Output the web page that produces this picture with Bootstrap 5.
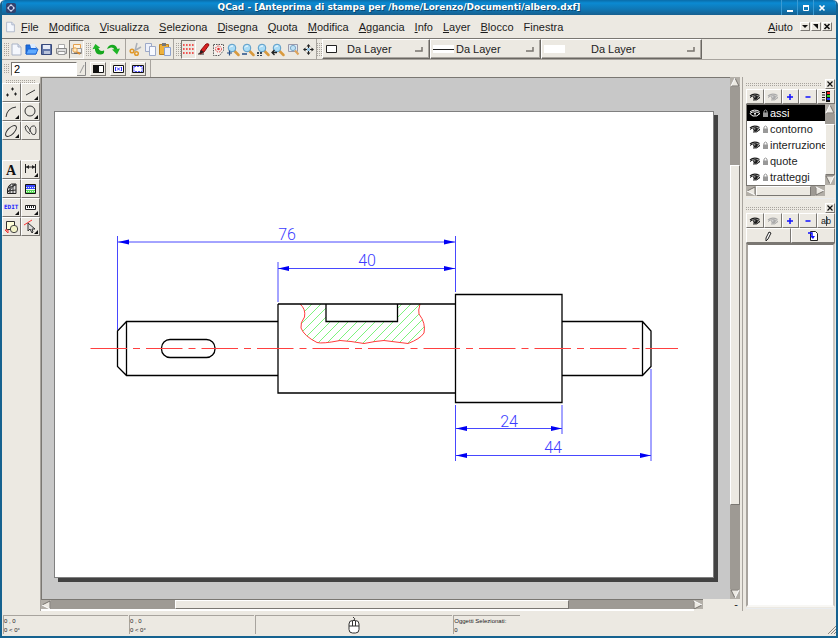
<!DOCTYPE html>
<html lang="it">
<head>
<meta charset="utf-8">
<meta name="viewport" content="width=device-width, initial-scale=1">
<title>QCad</title>
<link rel="stylesheet" href="https://cdn.jsdelivr.net/npm/bootstrap@5.3.0/dist/css/bootstrap.min.css">
<style>
:root{--face:#ece9e2;--lo:#7a7772;--mid:#a8a49e;--groove:#9e9a94;--frame:#15628f}
body{font-family:"Liberation Sans",Arial,sans-serif;font-size:11px;line-height:16px;color:#1c1c1c;background:#fff}
svg{display:block;flex:none}
.window{background:var(--face);border:solid var(--frame);border-width:0 2px 2px;border-radius:5px 5px 0 0}
.titlebar{height:15px;background:linear-gradient(#0a6ca8,#0b8ad2 3px,#0f78b6 9px,#17608f);padding:0 5px;color:#fff;margin:0 -2px;border-radius:5px 5px 0 0}
.titlebar h1{font:bold 9px/15px "DejaVu Sans",sans-serif;text-shadow:1px 1px 0 #0b4a73}
.wbtn{width:16px;height:15px;border-left:1px solid #3a9bd4 !important}
.flat{padding:0;border:0;border-radius:0;background:none;color:inherit;font:inherit;line-height:inherit;display:flex;align-items:center;justify-content:center}
.menubar{height:24px;border-bottom:1px solid var(--lo);padding:0 3px 0 2px}
.menubar .flat{padding:0 5px}
.menubar u{text-underline-offset:1px}
.menubar .mdi{width:10px;height:9px;padding:0;margin-right:1px}
.bevel{border:1px solid !important;border-color:#fff var(--lo) var(--lo) #fff !important}
.sunk{border:1px solid !important;border-color:var(--lo) #fff #fff var(--lo) !important}
.strip{height:21px;border-bottom:1px solid var(--mid);padding-left:2px}
.strip.two{height:17px;border-bottom:0}
.tb{width:15px;height:19px}
.grip,.hgrip{background:linear-gradient(var(--face) 50%,transparent 0) 0 0/2px 2px,linear-gradient(90deg,var(--mid) 50%,transparent 0) 0 0/2px 2px}
.grip{width:5px;align-self:stretch;margin:3px 0}
.hgrip{height:4px}
.sp{margin-left:2px}
.vline{width:1px;align-self:stretch;background:var(--mid)}
.combo{height:20px;border:1px solid;border-color:#fff #6a6762 #6a6762 #fff;box-shadow:inset -1px -1px var(--mid);padding:0 6px 0 3px}
.combo select{appearance:none;border:0;background:none;padding:0;font:inherit;color:inherit;outline-offset:-2px;min-width:0}
.combo.pen{flex:0 0 108px}.combo.line{flex:0 0 111px;padding-left:2px}.combo.fillw{flex:0 0 161px;padding-left:2px}
.combo.line select{margin-left:2px}.combo.pen select{margin-left:9px}.combo.fillw select{margin-left:26px}
.numbox{height:14px;width:66px;border:1px solid;border-color:var(--lo) #fff #fff var(--lo);padding:0 2px;font:inherit;background:#fff}
.mini{width:16px;height:14px}
.toolcol{width:39px;border-right:1px solid var(--mid);padding-top:2px}
.tools{display:grid;grid-template-columns:19px 19px}
.tools .flat{height:19px}
.canvas{background:#c8c8c8;border:solid var(--lo);border-width:1px 0 0 1px;padding:33px 16px 21px 12px}
.sheet{background:#fff;border:1px solid #808080;box-shadow:4px 4px 0 #424242}
.sb{background:var(--groove)}
.vsb{width:10px}.hsb{height:10px;border-top:1px solid var(--lo)}
.dock .hsb{height:11px}
.thumb{background:var(--face);border:1px solid;border-color:#fff var(--lo) var(--lo) #fff}
.trim{height:3px}
.trim.low{height:2px}
.cornr{width:39px;padding-right:4px;line-height:10px}
.dock{width:94px;border-left:1px solid var(--mid);padding:0 1px 0 3px}
.dock .head{height:12px;padding-top:1px}
.dock .close-x{width:10px;height:10px}
.row5{display:grid;grid-template-columns:repeat(5,1fr);height:15px}
.row2{display:grid;grid-template-columns:1fr 1fr;height:15px}
.layers{height:81px;border:solid var(--lo);border-width:1px 0 0 1px;background:#fff;overflow:hidden}
.layers .list-group-item{padding:0 0 0 2px;border:0;height:16px;line-height:16px;gap:1px;background:none;color:inherit;white-space:nowrap;overflow:hidden;flex:none}
.layers .list-group-item.sel{background:#000;color:#fff}
.blocks{background:#fff;border:2px solid;border-color:var(--lo) #ccc9c3 #f8f7f4 var(--mid)}
.statusbar{height:25px;padding:4px 0 2px 1px;font-size:6px;line-height:9px;color:#222}
.pane{border:solid var(--mid);border-width:1px 0 0 1px;margin-right:1px;padding-top:1px}
.cad{font:300 16px Roboto,sans-serif;fill:#3c3cff}
</style>
<script src="https://cdn.jsdelivr.net/npm/bootstrap@5.3.0/dist/js/bootstrap.bundle.min.js"></script>
</head>
<body>
<svg width="0" height="0" class="position-absolute" aria-hidden="true">
<symbol id="page" viewBox="0 0 15 15"><path d="M3 2h6l3 3v8H3z" fill="#f4f7fd" stroke="#a9b3c6"/><path d="M9 2v3h3" fill="#dbe2f0" stroke="#a9b3c6"/></symbol>
<symbol id="lens" viewBox="0 0 15 15"><path d="M8.500 9l4 4" stroke="#d99a3d" stroke-width="2.500" stroke-linecap="round"/><circle cx="6" cy="6" r="3.800" fill="#a9dcf6" stroke="#5a9cc8"/><path d="M4 5.500Q5 3.500 7 4" stroke="#fff" fill="none"/></symbol>
<symbol id="eye" viewBox="0 0 12 10"><path d="M1 5.500Q5 2 11 5.500Q8 9 4 8" fill="none" stroke="currentColor"/><circle cx="6.500" cy="5.500" r="2.300" fill="currentColor"/><path d="M1 4Q5 .5 10.500 3.500" stroke="currentColor" stroke-width="1.200" fill="none"/><circle cx="5.800" cy="4.800" r=".6" fill="#fff"/></symbol>
<symbol id="eyeoff" viewBox="0 0 12 10"><path d="M1 5.500Q5 2 11 5.500Q8 9 4 8Q2 7 1 5.500M1 4Q5 .5 10.500 3.500" fill="none" stroke="currentColor"/><circle cx="6" cy="5.800" r="1" fill="currentColor"/></symbol>
<symbol id="lock" viewBox="0 0 7 10"><path d="M2 5V3q1.500-2 3 0v2" stroke="#999" fill="none"/><path d="M1 4.500h5V9H1z" fill="#999"/></symbol>
<symbol id="up" viewBox="0 0 10 10"><path d="M0 0h10v10H0z" fill="#b3afa8"/><path d="M5 1L1 9h8z" fill="#ece9e2"/><path d="M5 1l4 8H1" stroke="#77736e" fill="none"/><path d="M5 1L1 9" stroke="#fff"/></symbol>
<symbol id="x" viewBox="0 0 8 8"><path d="M1.500 1.500l5 5m0-5l-5 5" stroke="#111" stroke-width="1.200"/></symbol>
<symbol id="corner" viewBox="0 0 8 6"><path d="M0 5h7V1" stroke="#77736e" stroke-width="1.500" fill="none"/></symbol>
</svg>

<div class="window vh-100 d-flex flex-column overflow-hidden">
<header class="titlebar d-flex align-items-center flex-shrink-0">
  <svg width="12" height="12" viewBox="0 0 12 12"><rect x="1" y="1" width="10" height="10" rx="2" fill="#33436f"/><path d="M6 2l4 4-4 4-4-4z" fill="#d7dcf2"/><circle cx="6" cy="6" r="2" fill="#2c3768"/></svg>
  <h1 class="flex-grow-1 text-center m-0 text-nowrap">QCad - [Anteprima di stampa per /home/Lorenzo/Documenti/albero.dxf]</h1>
  <button class="flat wbtn" aria-label="Riduci"><svg width="10" height="10"><path d="M2 8h6" stroke="#fff" stroke-width="2"/></svg></button>
  <button class="flat wbtn" aria-label="Ingrandisci"><svg width="10" height="10"><path d="M2.500 2.500h5v5h-5z" stroke="#fff" fill="none"/><path d="M2 3h6" stroke="#fff" stroke-width="2"/></svg></button>
  <button class="flat wbtn me-1" aria-label="Chiudi"><svg width="10" height="10"><path d="M2.500 2.500l5 5m0-5l-5 5" stroke="#fff" stroke-width="1.700"/></svg></button>
</header>

<nav class="menubar d-flex align-items-stretch flex-shrink-0">
  <svg class="align-self-center" width="12" height="14"><use href="#page" width="13" height="14"/></svg>
  <button class="flat"><span><u>F</u>ile</span></button>
  <button class="flat"><span><u>M</u>odifica</span></button>
  <button class="flat"><span><u>V</u>isualizza</span></button>
  <button class="flat"><span><u>S</u>eleziona</span></button>
  <button class="flat"><span><u>D</u>isegna</span></button>
  <button class="flat"><span><u>Q</u>uota</span></button>
  <button class="flat"><span><u>M</u>odifica</span></button>
  <button class="flat"><span><u>A</u>ggancia</span></button>
  <button class="flat"><span><u>I</u>nfo</span></button>
  <button class="flat"><span><u>L</u>ayer</span></button>
  <button class="flat"><span><u>B</u>locco</span></button>
  <button class="flat"><span>Finestra</span></button>
  <button class="flat ms-auto sp"><span><u>A</u>iuto</span></button>
  <div class="d-flex align-items-center sp">
    <button class="flat bevel mdi" aria-label="Riduci documento"><svg width="8" height="7"><path d="M1 2h6L4 5z" fill="#111"/></svg></button>
    <button class="flat bevel mdi" aria-label="Ripristina documento"><svg width="8" height="7"><path d="M1 1h5v5z" fill="#111"/></svg></button>
    <button class="flat bevel mdi" aria-label="Chiudi documento"><svg width="8" height="7"><path d="M1.500 1l5 5m0-5l-5 5" stroke="#111" stroke-width="1.600"/></svg></button>
  </div>
</nav>

<div class="strip d-flex align-items-center flex-shrink-0">
  <span class="grip"></span>
  <button class="flat tb" aria-label="Nuovo"><svg width="15" height="15"><use href="#page"/></svg></button>
  <button class="flat tb" aria-label="Apri"><svg width="15" height="15"><path d="M2 3h4l1 2h5v7H2z" fill="#1d6fe0" stroke="#1a5cc0"/><path d="M6 2h5l1 4H7z" fill="#dcecff"/><path d="M4 7h10l-2 5H2z" fill="#5eaaff" stroke="#1f68d6"/></svg></button>
  <button class="flat tb" aria-label="Salva"><svg width="15" height="15"><path d="M2.500 2.500h10v10h-10z" fill="#6276a8" stroke="#384a7c"/><path d="M4 3h7v4H4z" fill="#e6ebf6"/><path d="M5 9h6v3H5z" fill="#b9c3db"/></svg></button>
  <button class="flat tb" aria-label="Stampa"><svg width="15" height="15"><path d="M4.500 2.500h6v4h-6z" fill="#fff" stroke="#aaa"/><path d="M2.500 6.500h10v5h-10z" fill="#ddd" stroke="#888"/><path d="M4 9.500h7v3H4z" fill="#f8f8f8" stroke="#999"/></svg></button>
  <button class="flat tb sunk" aria-label="Anteprima di stampa"><svg width="13" height="15"><path d="M3.500 2.500h7v4h-7z" fill="#fff4df" stroke="#e5a04d"/><path d="M1.500 6.500h10v5h-10z" fill="#eee" stroke="#999"/><path d="M4 11h7" stroke="#444"/><circle cx="5" cy="8" r="2.200" fill="#ffe7ba" stroke="#e8a24a"/><path d="M7 10l3 2" stroke="#dd8a2a" stroke-width="2"/></svg></button>
  <span class="grip sp"></span>
  <button class="flat tb" aria-label="Annulla"><svg width="15" height="15"><path d="M4 5h3q1 4 4 4 2 0 2-1 1 4-3 4.500Q5 13 4 8z" fill="#17a81f"/><path d="M1 6.500L5 2l4 4.500z" fill="#1eb527" transform="rotate(-12 5 5)"/></svg></button>
  <button class="flat tb" aria-label="Ripeti"><svg width="15" height="15"><path d="M1 7q2-5 7-4 3 1 3.500 5H8.500Q8 5 5 5.500 3 6 1 7z" fill="#17a81f"/><path d="M6 7.500l8-1-3 6z" fill="#1eb527"/></svg></button>
  <span class="vline ms-1"></span>
  <button class="flat tb sp" aria-label="Taglia"><svg width="15" height="15"><path d="M9 1L7 9M13 5l-7 4" stroke="#aab0b8" stroke-width="1.500"/><circle cx="4" cy="9" r="1.800" fill="none" stroke="#e09a2c" stroke-width="1.500"/><circle cx="8.500" cy="11.500" r="1.800" fill="none" stroke="#e09a2c" stroke-width="1.500"/></svg></button>
  <button class="flat tb" aria-label="Copia"><svg width="15" height="15"><path d="M2.500 1.500h6v8h-6z" fill="#eef1fa" stroke="#9ca9c8"/><path d="M6.500 4.500h6v9h-6z" fill="#f7f9ff" stroke="#9ca9c8"/></svg></button>
  <button class="flat tb" aria-label="Incolla"><svg width="15" height="15"><path d="M1.500 2.500h9v10h-9z" fill="#eeb13c" stroke="#b98122"/><path d="M4 1h4v3H4z" fill="#777"/><path d="M6.500 5.500h6v8h-6z" fill="#e7edfb" stroke="#8da2cf"/></svg></button>
  <span class="vline"></span>
  <span class="grip sp"></span>
  <button class="flat tb sunk" aria-label="Griglia"><svg width="13" height="15"><g stroke="#f12424" stroke-width="1.600" stroke-dasharray="1.600 1.400"><path d="M1 3h12M1 7h12M1 11h12"/></g></svg></button>
  <button class="flat tb" aria-label="Bozza"><svg width="15" height="15"><path d="M2 12h6" stroke="#222"/><path d="M5 8l5-6q3-1 3 1L8 10l-4 2z" fill="#d91f1f" stroke="#8e1010"/><path d="M5 8l3 2-5 2z" fill="#222"/></svg></button>
  <button class="flat tb" aria-label="Ridisegna"><svg width="15" height="15"><path d="M2.500 2.500h10v6l-4 5h-6z" fill="#f4f1ec" stroke="#555" stroke-dasharray="1.500 1"/><circle cx="7.500" cy="7" r="3" fill="none" stroke="#e03434" stroke-dasharray="1.500 1"/><circle cx="7.500" cy="7" r="1.300" fill="#e03434"/></svg></button>
  <button class="flat tb" aria-label="Zoom avanti"><svg width="15" height="15"><use href="#lens"/><path d="M1 11h5M3.500 8.500v5" stroke="#234d86" stroke-width="1.200"/></svg></button>
  <button class="flat tb" aria-label="Zoom indietro"><svg width="15" height="15"><use href="#lens"/><path d="M1 12h5" stroke="#234d86" stroke-width="1.300"/></svg></button>
  <button class="flat tb" aria-label="Zoom automatico"><svg width="15" height="15"><use href="#lens"/><path d="M1 10h2v2H1zM4 10h2v2H4zM1 13h2v1H1zM4 13h2v1H4z" fill="#345"/></svg></button>
  <button class="flat tb" aria-label="Vista precedente"><svg width="15" height="15"><use href="#lens"/><path d="M6 10.500H1M3.500 8L1 10.500 3.500 13" stroke="#222" stroke-width="1.300" fill="none"/></svg></button>
  <button class="flat tb" aria-label="Zoom finestra"><svg width="15" height="15"><path d="M2.500 2.500h9v7h-9z" fill="#dce9f4" stroke="#99a"/><circle cx="7" cy="6" r="2.600" fill="#bfe2f6" stroke="#7ba8c8"/><path d="M9 8.500l3.500 4" stroke="#dda35a" stroke-width="2"/></svg></button>
  <button class="flat tb" aria-label="Sposta vista"><svg width="15" height="15"><path d="M7.500 3v9M3 7.500h9" stroke="#222"/><path d="M7.500 2L5.500 4.500h4zM7.500 13L5.500 10.500h4zM2 7.500L4.500 5.500v4zM13 7.500L10.500 5.500v4z" fill="#222"/><path d="M6 6h3v3H6z" fill="#9cc8e4"/></svg></button>
  <span class="vline"></span>
  <span class="grip"></span>
  <label class="combo pen d-flex align-items-center"><svg width="12" height="10"><path d="M.5 1.500h10v7H.5z" fill="#fff" stroke="#222"/></svg><select class="flex-grow-1" aria-label="Colore"><option>Da Layer</option></select><svg width="8" height="6"><use href="#corner"/></svg></label>
  <label class="combo line d-flex align-items-center"><svg width="21" height="10"><path d="M0 1h21v8H0z" fill="#fff"/><path d="M0 5.500h21" stroke="#222"/></svg><select class="flex-grow-1" aria-label="Spessore"><option>Da Layer</option></select><svg width="8" height="6"><use href="#corner"/></svg></label>
  <label class="combo fillw d-flex align-items-center"><svg width="21" height="10"><path d="M0 1h21v8H0z" fill="#fff"/></svg><select class="flex-grow-1" aria-label="Tipo di linea"><option>Da Layer</option></select><svg width="8" height="6"><use href="#corner"/></svg></label>
</div>

<div class="strip two d-flex align-items-center flex-shrink-0">
  <span class="grip"></span>
  <input class="numbox sp" type="text" value="2" aria-label="Scala">
  <svg width="9" height="14"><path d="M3 11l4-8" stroke="#999"/><path d="M0 13.500h8.500V0" stroke="#888" fill="none"/></svg>
  <button class="flat bevel mini ms-1" aria-label="Bianco e nero"><svg width="11" height="10"><path d="M.5 1.500h10v7H.5z" fill="#fff" stroke="#111"/><path d="M0 1h6v8H0z" fill="#111"/></svg></button>
  <button class="flat bevel mini ms-1" aria-label="Centra sulla pagina"><svg width="11" height="10"><path d="M.5 1.500h10v7H.5z" fill="#fff" stroke="#111"/><path d="M2.500 3v4M8.500 3v4M4 3.500l3 3m0-3l-3 3" stroke="#33f"/></svg></button>
  <button class="flat bevel mini ms-1" aria-label="Adatta alla pagina"><svg width="12" height="10"><path d="M.5 1.500h11v7H.5z" fill="#cfd0ff" stroke="#111"/><path d="M2 2.500h8v5H2z" fill="#fff" stroke="#55f" stroke-dasharray="2 1"/></svg></button>
  <span class="vline ms-1"></span>
</div>

<div class="d-flex flex-grow-1 overflow-hidden">
  <aside class="toolcol flex-shrink-0">
    <div class="hgrip mx-1"></div>
    <div class="tools">
      <button class="flat bevel" aria-label="Punti"><svg width="17" height="17"><path d="M3 11h3M4.500 9.500v3M8 5h3M9.500 3.500v3M11 10h3M12.500 8.500v3" stroke="#222"/></svg></button>
      <button class="flat bevel" aria-label="Linee"><svg width="17" height="17"><path d="M4 11l9-5" stroke="#333"/><path d="M16 12v4h-4z" fill="#111"/></svg></button>
      <button class="flat bevel" aria-label="Archi"><svg width="17" height="17"><path d="M3 14q1-9 10-10" stroke="#333" fill="none"/><path d="M16 12v4h-4z" fill="#111"/></svg></button>
      <button class="flat bevel" aria-label="Cerchi"><svg width="17" height="17"><circle cx="8" cy="8" r="5" stroke="#333" fill="none"/><path d="M16 12v4h-4z" fill="#111"/></svg></button>
      <button class="flat bevel" aria-label="Ellissi"><svg width="17" height="17"><ellipse cx="8" cy="9" rx="7" ry="3.300" transform="rotate(-45 8 9)" stroke="#333" fill="none"/><path d="M16 12v4h-4z" fill="#111"/></svg></button>
      <button class="flat bevel" aria-label="Spline"><svg width="17" height="17"><path d="M8 12Q3 9 3 5q1-3 3 0l4 7q4 2 4-3 0-6-3-5-3 0-3 6" stroke="#444" fill="none"/></svg></button>
    </div>
    <div class="tools mt-3 pt-1">
      <button class="flat bevel" aria-label="Testo"><svg width="17" height="17"><text x="3" y="14" font-family="Liberation Serif,serif" font-size="14" font-weight="bold" fill="#111">A</text></svg></button>
      <button class="flat bevel" aria-label="Quote"><svg width="17" height="17"><path d="M3.500 3v9M13.500 3v9M4 6h9" stroke="#222"/><path d="M4 6l3-2v4zM13 6l-3-2v4z" fill="#222"/><path d="M16 12v4h-4z" fill="#111"/></svg></button>
      <button class="flat bevel" aria-label="Tratteggio"><svg width="17" height="17"><path d="M4.500 13.500V9q1-4 4-5h4.500v9.500z" fill="#ddd" stroke="#222"/><path d="M5 8l8-3M5 11l8-1M7 5v8M10 4v9M5 12l7-8" stroke="#333"/></svg></button>
      <button class="flat bevel" aria-label="Immagine"><svg width="17" height="17"><path d="M3.500 4.500h10v9h-10z" fill="#5ad65a" stroke="#111"/><path d="M4 5h9v4H4z" fill="#3c48ff"/><path d="M4 9.500h9" stroke="#efffef"/><path d="M4 7.500h9M4 11.500h9" stroke="#dfffdf" stroke-dasharray="1 1"/></svg></button>
    </div>
    <div class="tools">
      <button class="flat bevel" aria-label="Modifica"><svg width="17" height="17"><text x="1" y="10" font-family="DejaVu Sans Mono,monospace" font-size="6" font-weight="bold" fill="#22f">EDIT</text><path d="M16 12v4h-4z" fill="#111"/></svg></button>
      <button class="flat bevel" aria-label="Misura"><svg width="17" height="17"><path d="M3.500 6.500h10v4h-10z" fill="#fff" stroke="#222"/><path d="M5.500 7v2M7.500 7v2M9.500 7v2M11.500 7v2" stroke="#222"/><path d="M16 12v4h-4z" fill="#111"/></svg></button>
      <button class="flat bevel" aria-label="Blocchi"><svg width="17" height="17"><path d="M3.500 3.500h8v8h-8z" fill="#ffffd8" stroke="#333"/><circle cx="11" cy="11" r="3.700" fill="#f3f3c8" stroke="#444"/><path d="M2 12h3v3M2 12l3 3" stroke="#e33" fill="none"/></svg></button>
      <button class="flat bevel" aria-label="Seleziona"><svg width="17" height="17"><path d="M2 7l8-5" stroke="#f33"/><path d="M6 5v8l2-2 2 4 1-1-1-3h3z" fill="#ddd" stroke="#333"/><path d="M16 12v4h-4z" fill="#111"/></svg></button>
    </div>
  </aside>

  <main class="d-flex flex-column flex-grow-1 overflow-hidden">
    <div class="d-flex flex-grow-1 overflow-hidden">
      <div class="canvas d-flex flex-grow-1 overflow-hidden">
        <div class="sheet flex-grow-1 overflow-hidden">
          <svg class="w-100 h-100" viewBox="55 112 658 465" role="img" aria-label="Albero, vista quotata">
            <defs><clipPath id="section"><path d="M300 304Q306 309 304.500 317Q300 323 301 328Q304 336 317 342.500Q322 344 340 340.500Q350 341 364 343.500Q376 341 384 340.500Q396 342 408 343.500Q420 339 424 333Q426 323 419 314Q418 311 420 304H397.500V321.500H326V304z"/></clipPath></defs>
            <path clip-path="url(#section)" stroke="#5cf05c" stroke-width=".8" d="M312 304l-50 50M321 304l-50 50M330 304l-50 50M339 304l-50 50M348 304l-50 50M357 304l-50 50M366 304l-50 50M375 304l-50 50M384 304l-50 50M393 304l-50 50M402 304l-50 50M411 304l-50 50M420 304l-50 50M429 304l-50 50M438 304l-50 50M447 304l-50 50M456 304l-50 50"/>
            <path fill="none" stroke="#ff3c3c" d="M300 304Q306 309 304.500 317Q300 323 301 328Q304 336 317 342.500Q322 344 340 340.500Q350 341 364 343.500Q376 341 384 340.500Q396 342 408 343.500Q420 339 424 333Q426 323 419 314Q418 311 420 304"/>
            <g fill="none" stroke="#000" stroke-width="1.300">
              <path d="M278 321.500H126.500L117.500 331V366.500L126.500 375.500H278M126.500 321.500V375.500"/>
              <rect x="161.500" y="339.500" width="53.500" height="18" rx="8.500"/>
              <path d="M278 304H455.500M278 304V393H455.500M326 304V321.500H397.500V304M455.500 294.500H562V402.500H455.500z"/>
              <path d="M562 321.500H642.500L651 331V366.500L642.500 375.500H562M642.500 321.500V375.500"/>
            </g>
            <path d="M90.500 348.500H678" stroke="#ff4040" stroke-dasharray="36.500 6 7 6"/>
            <path fill="none" stroke="#4848ff" d="M117.500 236V330M455.500 236V292M117 242H455M278 262V302M278 268.500H455M455.500 405V461M562 405V434M455 428.500H562M651 369V461M455 455.500H651"/>
            <path fill="#0000f4" d="M118 242l11-2.500v5zM455 242l-11-2.500v5zM278 268.500l11-2.500v5zM455 268.500l-11-2.500v5zM456 428.500l11-2.500v5zM562 428.500l-11-2.500v5zM456 455.500l11-2.500v5zM651 455.500l-11-2.500v5z"/>
            <g class="cad" text-anchor="middle"><text x="287" y="240">76</text><text x="367" y="266">40</text><text x="509" y="427">24</text><text x="553" y="453">44</text></g>
          </svg>
        </div>
      </div>
      <div class="sb vsb d-flex flex-column flex-shrink-0" aria-hidden="true">
        <svg width="10" height="10"><use href="#up"/></svg>
        <div style="flex:78"></div><div class="thumb" style="flex:340"></div><div style="flex:85"></div>
        <svg width="10" height="10"><g transform="rotate(180 5 5)"><use href="#up" width="10" height="10"/></g></svg>
      </div>
      <span class="sp"></span>
    </div>
    <div class="d-flex flex-shrink-0">
      <div class="sb hsb d-flex flex-grow-1" aria-hidden="true">
        <svg width="10" height="9"><g transform="rotate(-90 5 5)"><use href="#up" width="10" height="10"/></g></svg>
        <div style="flex:123"></div><div class="thumb" style="flex:391"></div><div style="flex:123"></div>
        <svg width="10" height="9"><g transform="rotate(90 5 5)"><use href="#up" width="10" height="10"/></g></svg>
      </div>
      <span class="cornr text-end">-</span>
    </div>
    <div class="trim low bg-white flex-shrink-0 me-5"></div>
  </main>

  <aside class="dock d-flex flex-column flex-shrink-0">
    <div class="head d-flex align-items-center"><span class="hgrip flex-grow-1 me-1"></span><button class="flat bevel close-x" aria-label="Chiudi elenco layer"><svg width="8" height="8"><use href="#x"/></svg></button></div>
    <div class="row5">
      <button class="flat bevel" aria-label="Mostra tutti"><svg width="12" height="10"><use href="#eye"/></svg></button>
      <button class="flat bevel" aria-label="Nascondi tutti"><svg width="12" height="10" color="#aaa"><use href="#eye"/></svg></button>
      <button class="flat bevel" aria-label="Aggiungi layer"><svg width="8" height="8"><path d="M1 4h6M4 1v6" stroke="#11f" stroke-width="1.500"/></svg></button>
      <button class="flat bevel" aria-label="Rimuovi layer"><svg width="8" height="8"><path d="M1.500 4h5" stroke="#11f" stroke-width="1.500"/></svg></button>
      <button class="flat bevel" aria-label="Attributi layer"><svg width="10" height="11"><path d="M1 1.500h3M1 4h3M1 6.500h3M1 9h3" stroke="#111"/><path d="M5 0h4v11H5z" fill="#111"/><path d="M6 1h3v2H6z" fill="#f22"/><path d="M6 4h3v2H6z" fill="#2d2"/><path d="M6 7h3v2H6z" fill="#23f"/></svg></button>
    </div>
    <div class="d-flex">
      <ul class="layers list-group rounded-0 flex-grow-1 overflow-hidden">
        <li class="list-group-item d-flex align-items-center sel"><svg width="12" height="10"><use href="#eyeoff"/></svg><svg width="7" height="10"><use href="#lock"/></svg><span>assi</span></li>
        <li class="list-group-item d-flex align-items-center"><svg width="12" height="10"><use href="#eye"/></svg><svg width="7" height="10"><use href="#lock"/></svg><span>contorno</span></li>
        <li class="list-group-item d-flex align-items-center"><svg width="12" height="10"><use href="#eye"/></svg><svg width="7" height="10"><use href="#lock"/></svg><span>interruzione</span></li>
        <li class="list-group-item d-flex align-items-center"><svg width="12" height="10"><use href="#eye"/></svg><svg width="7" height="10"><use href="#lock"/></svg><span>quote</span></li>
        <li class="list-group-item d-flex align-items-center"><svg width="12" height="10"><use href="#eye"/></svg><svg width="7" height="10"><use href="#lock"/></svg><span>tratteggi</span></li>
      </ul>
      <div class="sb vsb d-flex flex-column" aria-hidden="true">
        <svg width="10" height="10"><use href="#up"/></svg>
        <div style="flex:10"></div><div class="thumb" style="flex:51"></div>
        <svg width="10" height="10"><g transform="rotate(180 5 5)"><use href="#up" width="10" height="10"/></g></svg>
      </div>
    </div>
    <div class="d-flex">
    <div class="sb hsb d-flex flex-grow-1" aria-hidden="true">
      <svg width="10" height="10"><g transform="rotate(-90 5 5)"><use href="#up" width="10" height="10"/></g></svg>
      <div class="thumb" style="flex:54"></div><div style="flex:4"></div>
      <svg width="10" height="10"><g transform="rotate(90 5 5)"><use href="#up" width="10" height="10"/></g></svg>
    </div>
    <span class="vsb"></span>
    </div>
    <div class="border-bottom border-secondary-subtle trim"></div>
    <div class="trim low flex-shrink-0"></div>
    <div class="head d-flex align-items-center"><span class="hgrip flex-grow-1 me-1"></span><button class="flat bevel close-x" aria-label="Chiudi elenco blocchi"><svg width="8" height="8"><use href="#x"/></svg></button></div>
    <div class="row5">
      <button class="flat bevel" aria-label="Mostra blocchi"><svg width="12" height="10"><use href="#eye"/></svg></button>
      <button class="flat bevel" aria-label="Nascondi blocchi"><svg width="12" height="10" color="#aaa"><use href="#eye"/></svg></button>
      <button class="flat bevel" aria-label="Aggiungi blocco"><svg width="8" height="8"><path d="M1 4h6M4 1v6" stroke="#11f" stroke-width="1.500"/></svg></button>
      <button class="flat bevel" aria-label="Rimuovi blocco"><svg width="8" height="8"><path d="M1.500 4h5" stroke="#11f" stroke-width="1.500"/></svg></button>
      <button class="flat bevel" aria-label="Rinomina blocco"><svg width="11" height="12"><text x="0" y="9" font-family="Liberation Sans,sans-serif" font-size="9" fill="#222">ab</text><path d="M5.500 1v10" stroke="#222" stroke-width=".8"/></svg></button>
    </div>
    <div class="row2">
      <button class="flat bevel" aria-label="Modifica blocco"><svg width="10" height="12"><path d="M3 8l3-6 2 1-3 6-2 2z" fill="#fff" stroke="#222"/></svg></button>
      <button class="flat bevel" aria-label="Inserisci blocco"><svg width="12" height="12"><path d="M3.500 1.500h5l2 2v7h-7z" fill="#fff" stroke="#222"/><path d="M1 3h4v3" stroke="#11f" fill="none" stroke-width="1.500"/><path d="M3 6h5L6 9z" fill="#11f"/></svg></button>
    </div>
    <div class="blocks flex-grow-1"></div>
    <div class="border-bottom border-secondary-subtle trim low"></div>
    <div class="trim low"></div>
  </aside>
</div>

<footer class="statusbar d-flex flex-shrink-0">
  <div class="pane" style="flex:0 0 15%"><div>0 , 0</div><div>0 &lt; 0°</div></div>
  <div class="pane" style="flex:0 0 15%"><div>0 , 0</div><div>0 &lt; 0°</div></div>
  <div class="pane d-flex justify-content-center" style="flex:0 0 23.700%"><svg width="12" height="17" viewBox="0 0 12 17"><path d="M6 3q2-1-1-3" stroke="#333" fill="none"/><rect x="1" y="3.500" width="10" height="12.500" rx="3.500" fill="#fff" stroke="#333"/><path d="M1 9h10M4.500 4v5M7.500 4v5" stroke="#333"/></svg></div>
  <div class="pane" style="flex:0 0 8%"><div>Oggetti Selezionati:</div><div>0</div></div>
  <svg class="ms-auto align-self-end" width="8" height="8"><path d="M0 8l8-8M3 8l5-5M6 8l2-2" stroke="#8a8680"/></svg>
</footer>
</div>
</body>
</html>
